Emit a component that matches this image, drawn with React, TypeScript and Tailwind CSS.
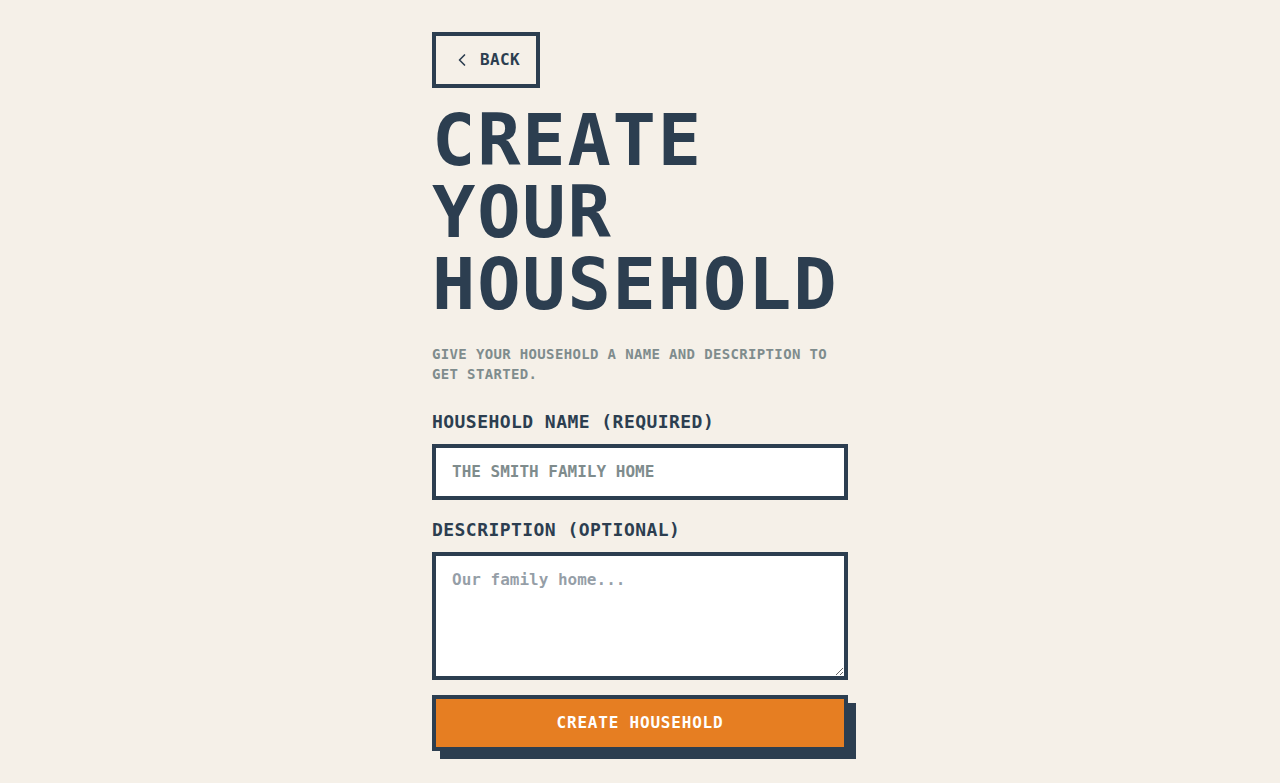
import { ChevronLeft } from "lucide-react";

export default function App() {
  return (
    <div
      className="min-h-screen bg-[#f5f0e8] text-[#2c3e50]"
      style={{ fontFamily: '"DejaVu Sans Mono", "Liberation Mono", monospace' }}
    >
      <div className="mx-auto w-full max-w-md px-4 py-8">
        <button className="mb-4 flex items-center gap-2 border-4 border-[#2c3e50] px-4 py-3 text-base font-bold uppercase tracking-wide">
          <ChevronLeft size={20} strokeWidth={2} />
          Back
        </button>

        <h1 className="mb-6 text-[72px] font-bold uppercase leading-none tracking-wide">
          Create
          <br />
          Your
          <br />
          Household
        </h1>

        <p className="mb-6 text-sm font-bold uppercase tracking-wide text-[#7f8c8d]">
          Give your household a name and description to get started.
        </p>

        <form className="flex flex-col" onSubmit={(e) => e.preventDefault()}>
          <div className="mb-4">
            <label className="mb-2 block text-lg font-bold uppercase tracking-wide">
              Household Name (Required)
            </label>
            <input
              className="block w-full border-4 border-[#2c3e50] bg-white px-4 py-3 text-base font-bold uppercase text-[#2c3e50] outline-none placeholder:text-[#7f8c8d]"
              placeholder="The Smith Family Home"
            />
          </div>

          <div className="mb-[15px]">
            <label className="mb-2 block text-lg font-bold uppercase tracking-wide">
              Description (Optional)
            </label>
            <textarea
              rows={4}
              className="block w-full border-4 border-[#2c3e50] bg-white px-4 py-3 text-base font-bold text-[#2c3e50] outline-none"
              placeholder="Our family home..."
            />
          </div>

          <button
            type="submit"
            className="w-full border-4 border-[#2c3e50] bg-[#e67e22] py-3 text-base font-bold uppercase tracking-wider text-white shadow-[8px_8px_0_#2c3e50]"
          >
            Create Household
          </button>
        </form>
      </div>
    </div>
  );
}
